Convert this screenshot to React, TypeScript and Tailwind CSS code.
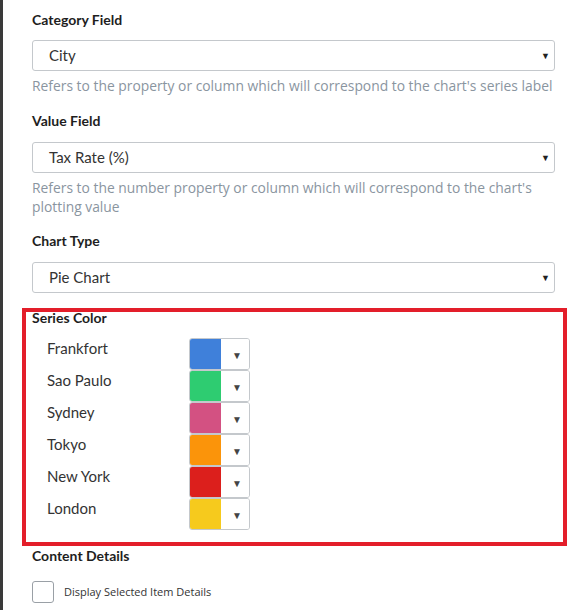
const series = [
  { name: "Frankfort", color: "bg-[#3f80da]" },
  { name: "Sao Paulo", color: "bg-[#2ecc71]" },
  { name: "Sydney", color: "bg-[#d35182]" },
  { name: "Tokyo", color: "bg-[#fb940a]" },
  { name: "New York", color: "bg-[#dc1f1c]" },
  { name: "London", color: "bg-[#f6ca1d]" },
];

function Caret() {
  return <span className="text-[9px] leading-none text-[#222]">▼</span>;
}

function Select({ value }: { value: string }) {
  return (
    <div className="flex h-[31px] items-center justify-between rounded-[3px] border border-[#c4c8cc] bg-white pl-4 pr-[4px]">
      <span className="text-[15px] text-[#333]">{value}</span>
      <Caret />
    </div>
  );
}

function Label({ children }: { children: string }) {
  return <div className="text-[14px] font-bold leading-5 text-[#1e1e1e]">{children}</div>;
}

function Help({ children }: { children: string }) {
  return (
    <p className="mt-[5px] font-['Open_Sans',sans-serif] text-[13.85px] leading-[19px] text-[#8a959f]">{children}</p>
  );
}

export default function App() {
  return (
    <div className="flex min-h-[610px] bg-white font-['Lato',sans-serif]">
      <div className="w-[3px] shrink-0 bg-[#3a3a3a]" />
      <div className="flex-1 pr-[10px] pt-[10px]">
        <div className="pl-[29px] pr-[12px]">
          <Label>Category Field</Label>
          <div className="mt-[10px]">
            <Select value="City" />
          </div>
          <Help>Refers to the property or column which will correspond to the chart's series label</Help>

          <div className="mt-[16px]">
            <Label>Value Field</Label>
          </div>
          <div className="mt-[11px]">
            <Select value="Tax Rate (%)" />
          </div>
          <Help>Refers to the number property or column which will correspond to the chart's plotting value</Help>

          <div className="mt-[15px]">
            <Label>Chart Type</Label>
          </div>
          <div className="mt-[11px]">
            <Select value="Pie Chart" />
          </div>
        </div>

        {/* series colour pickers */}
        <div className="ml-[19px] mt-[15px] border-4 border-[#e31e2a] pb-[12px] pl-[6px]">
          <div className="-mt-[4px]">
            <Label>Series Color</Label>
          </div>
          <div className="mt-[10px]">
            {series.map((s) => (
              <div key={s.name} className="flex h-[32px] items-start">
                <div className="w-[157px] pl-[15px] text-[15px] leading-5 text-[#333]">{s.name}</div>
                <div className="flex h-[32px] w-[61px] overflow-hidden rounded-[3px] border border-[#c4c8cc]">
                  <div className={`w-[31px] ${s.color}`} />
                  <div className="flex flex-1 items-center justify-center bg-white pl-1 pt-[2px]">
                    <span className="text-[10px] leading-none text-[#444]">▼</span>
                  </div>
                </div>
              </div>
            ))}
          </div>
        </div>

        <div className="pl-[29px]">
          <div className="mt-0">
            <Label>Content Details</Label>
          </div>
          <label className="mt-[15px] flex items-center gap-[10px]">
            <span className="h-[22px] w-[22px] rounded-[3px] border border-[#9aa0a6] bg-white" />
            <span className="font-['Open_Sans',sans-serif] text-[11px] text-[#333]">Display Selected Item Details</span>
          </label>
        </div>
      </div>
    </div>
  );
}
